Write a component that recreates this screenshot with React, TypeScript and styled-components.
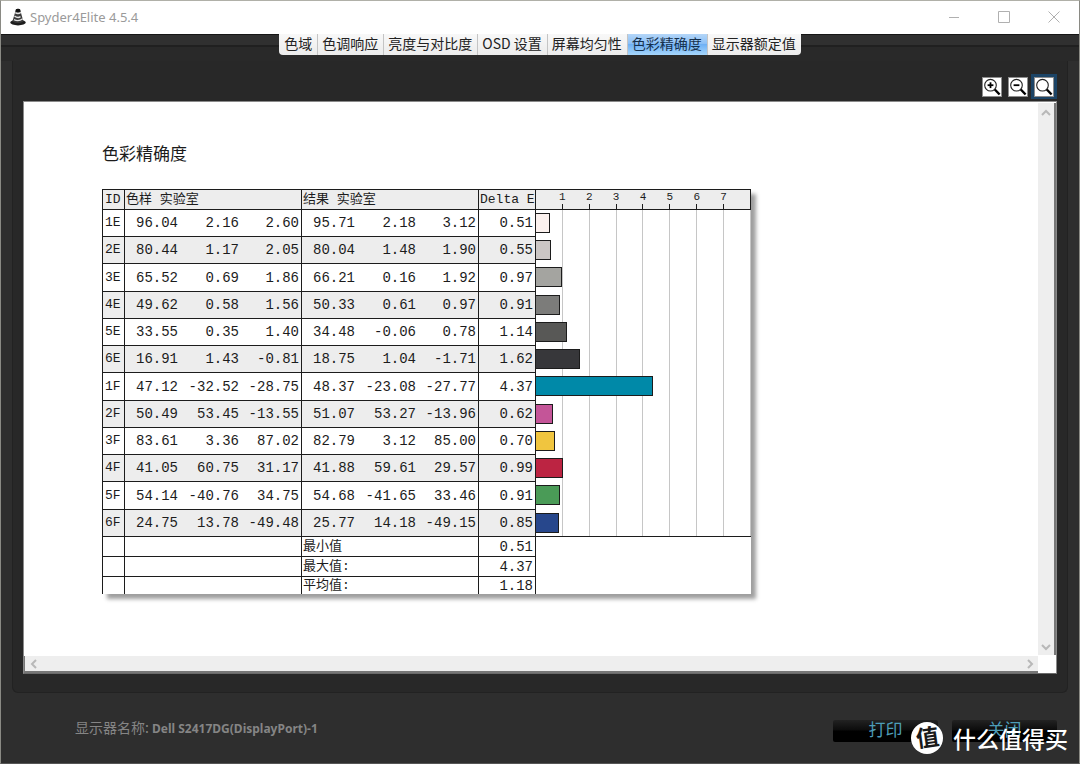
import React from 'react';
import styled, { createGlobalStyle } from 'styled-components';

const sans = `'Noto Sans', 'Noto Sans CJK SC', sans-serif`;
const mono = `'Liberation Mono', 'Noto Sans CJK SC', monospace`;
const ink = '#1c1c1c';

const GlobalStyle = createGlobalStyle`
  *, *::before, *::after { box-sizing: border-box; }
  body { margin: 0; background: #2e2e2e; font-family: ${sans}; }
  button { font: inherit; padding: 0; border: 0; background: none; cursor: pointer; }
`;

const Window = styled.div`
  position: relative;
  display: flex;
  flex-direction: column;
  min-height: 100vh;
  background: #2e2e2e;
  border: 1px solid #8a8a84;
  border-top-color: #b0b0a8;
  border-bottom-color: #555;
`;

const TitleBar = styled.header`
  display: flex;
  align-items: center;
  height: 33px;
  padding: 0 13px 2px 8px;
  background: #fff;
  color: #9a9a9a;
`;

const Title = styled.h1`
  flex: 1;
  margin: 0 0 0 3px;
  font-size: 13px;
  line-height: 20px;
  font-weight: 400;
`;

const WindowControls = styled.div`
  display: flex;
  gap: 26px;
`;

const WindowButton = styled.button`
  display: grid;
  place-items: center;
  width: 24px;
  height: 24px;
  color: #b0b0b0;
`;

const TabStrip = styled.nav`
  display: flex;
  justify-content: center;
  align-items: flex-start;
  height: 27px;
  border-top: 1px solid #161616;
  background: linear-gradient(#303030 0 10px, #202020 10px 12px, #292929 12px);
`;

const Tabs = styled.div`
  display: flex;
  height: 21px;
  margin-top: -1px;
`;

const Tab = styled.button<{ $active?: boolean }>`
  padding: 0 5px 3px 4px;
  font-family: 'Noto Sans CJK SC', sans-serif;
  font-size: 14px;
  line-height: 18px;
  color: ${(p) => (p.$active ? '#16304c' : '#222')};
  background: ${(p) =>
    p.$active
      ? 'linear-gradient(#b4d6f8, #8cc0f6 45%, #6fb1f5 50%, #a6d6fc)'
      : 'linear-gradient(#f8f8f8, #ececec)'};

  & + & { border-left: 1px solid #c4c4c4; }
  &:first-child { padding-left: 5px; border-bottom-left-radius: 4px; }
  &:last-child { border-bottom-right-radius: 4px; }
`;

const Panel = styled.main`
  flex: 1;
  display: flex;
  flex-direction: column;
  gap: 2px;
  margin: 0 11px;
  padding: 13px 10px 18px;
  background: #282828;
  border: 1px solid #222;
  border-top: 0;
  border-radius: 0 0 6px 6px;
`;

const Toolbar = styled.div`
  display: flex;
  justify-content: flex-end;
`;

const ToolButton = styled.button<{ $active?: boolean }>`
  display: grid;
  place-items: center;
  width: 26px;
  height: 25px;
  background: ${(p) => (p.$active ? '#1c4466' : 'transparent')};

  svg { background: #fff; border: 1px solid #8d8d8d; }
`;

const Viewer = styled.section`
  flex: 1;
  display: grid;
  grid-template-columns: 1fr 18px;
  grid-template-rows: 1fr 18px;
  background: #fff;
  border: 1px solid #8a8a8a;
  border-bottom-color: #6a6a6a;
`;

const Sheet = styled.article`
  padding: 39px 20px 40px 78px;
  color: ${ink};
`;

const ScrollTrack = styled.div<{ $vertical?: boolean }>`
  display: flex;
  flex-direction: ${(p) => (p.$vertical ? 'column' : 'row')};
  justify-content: space-between;
  align-items: center;
  margin-top: 1px;
  padding: ${(p) => (p.$vertical ? '2px 0 0' : '0')};
  background: #eee;
  border-right: ${(p) => (p.$vertical ? '2px solid #777' : '0')};
  border-bottom: ${(p) => (p.$vertical ? '0' : '2px solid #777')};
  border-left: ${(p) => (p.$vertical ? '0' : '1px solid #777')};
`;

const ScrollButton = styled.button`
  display: grid;
  place-items: center;
  width: 17px;
  height: 16px;
  color: #b8b8b8;
`;

const SheetTitle = styled.h2`
  margin: 0 0 24px;
  font-family: 'Noto Sans CJK SC', sans-serif;
  font-size: 17px;
  line-height: 24px;
  font-weight: 400;
`;

const Report = styled.table`
  table-layout: fixed;
  width: 649px;
  border-collapse: separate;
  border-spacing: 0;
  background: #fff;
  font-family: ${mono};
  font-size: 14px;
  box-shadow: 5px 5px 4px rgba(0, 0, 0, 0.38);

  th, td {
    padding: 0 2px 0 1px;
    border-top: 1px solid ${ink};
    border-left: 1px solid ${ink};
    font-weight: 400;
    text-align: left;
    line-height: 16px;
    white-space: nowrap;
  }
`;

const HeadRow = styled.tr`
  height: 20px;
  background: #ededed;
  font-size: 13px;

  && th:first-child { padding-left: 2px; }
  && th:last-child { padding: 0; border-right: 1px solid ${ink}; }
`;

const PatchRow = styled.tr`
  height: 27px;

  &:nth-child(4n + 3) { height: 28px; }
  &:nth-child(even) > :not(:last-child) { background: #ededed; }
  && > th { font-size: 13px; padding-left: 2px; }
`;

const SummaryRow = styled.tr`
  height: 20px;
  font-size: 13px;

  &:last-child { height: 18px; }
`;

const NumberCell = styled.td`
  && { text-align: right; font-size: 14px; }
`;

const LabValues = styled.div`
  display: grid;
  grid-template-columns: 1fr 61px 60px;
  text-align: right;
`;

const Axis = styled.div`
  display: grid;
  grid-template-columns: repeat(7, 1fr);
  padding: 0 13px;
`;

const AxisMark = styled.span`
  display: flex;
  flex-direction: column;
  align-items: center;
  font-size: 11px;
  line-height: 14px;

  &::after {
    content: '';
    width: 1px;
    height: 5px;
    background: ${ink};
  }
`;

const ChartCell = styled.td`
  && {
    padding: 0;
    border-top: 0;
    background: repeating-linear-gradient(
      to right,
      transparent 0 calc(12.5% - 1px),
      #c6c6c6 calc(12.5% - 1px) 12.5%
    );
  }
  ${PatchRow}:first-child > && { border-top: 1px solid ${ink}; }
`;

const Bar = styled.div`
  height: 20px;
  border: 1px solid ${ink};
  border-left: 0;
`;

const Footer = styled.footer`
  display: flex;
  justify-content: space-between;
  height: 70px;
  padding: 26px 22px 0 74px;
`;

const DisplayName = styled.p`
  margin: 0;
  font-size: 12px;
  line-height: 16px;
  color: #858585;
  span { font-family: 'Noto Sans CJK SC', sans-serif; font-size: 14px; }
`;

const Actions = styled.div`
  display: flex;
  gap: 14px;
`;

const ActionButton = styled.button`
  width: 105px;
  height: 22px;
  margin-top: 1px;
  padding-bottom: 4px;
  border-radius: 2px;
  background: linear-gradient(#222, #0c0c0c 45%, #000 50%);
  color: #4d9db8;
  font-family: 'Noto Sans CJK SC', sans-serif;
  font-size: 17px;
  line-height: 18px;
`;

const Watermark = styled.div`
  position: absolute;
  right: 11px;
  bottom: 9px;
  display: flex;
  align-items: center;
  gap: 10px;
  color: #fff;
  font-family: 'Noto Sans CJK SC', sans-serif;
  font-size: 23px;
  line-height: 32px;
  font-weight: 500;
  pointer-events: none;
`;

const Seal = styled.span`
  display: grid;
  place-items: center;
  width: 32px;
  height: 32px;
  border-radius: 50%;
  background: #fff;
  color: #1a1a1a;
  line-height: 28px;

  b { transform: rotate(-8deg); padding-bottom: 4px; }
`;

const tabs = ['色域', '色调响应', '亮度与对比度', 'OSD 设置', '屏幕均匀性', '色彩精确度', '显示器额定值'];

type Patch = { id: string; sample: string[]; result: string[]; delta: string; color: string };

const patches: Patch[] = [
  { id: '1E', sample: ['96.04', '2.16', '2.60'], result: ['95.71', '2.18', '3.12'], delta: '0.51', color: '#fbf1ee' },
  { id: '2E', sample: ['80.44', '1.17', '2.05'], result: ['80.04', '1.48', '1.90'], delta: '0.55', color: '#cbc6c4' },
  { id: '3E', sample: ['65.52', '0.69', '1.86'], result: ['66.21', '0.16', '1.92'], delta: '0.97', color: '#a4a4a0' },
  { id: '4E', sample: ['49.62', '0.58', '1.56'], result: ['50.33', '0.61', '0.97'], delta: '0.91', color: '#7c7c7a' },
  { id: '5E', sample: ['33.55', '0.35', '1.40'], result: ['34.48', '-0.06', '0.78'], delta: '1.14', color: '#585856' },
  { id: '6E', sample: ['16.91', '1.43', '-0.81'], result: ['18.75', '1.04', '-1.71'], delta: '1.62', color: '#37373a' },
  { id: '1F', sample: ['47.12', '-32.52', '-28.75'], result: ['48.37', '-23.08', '-27.77'], delta: '4.37', color: '#0089a8' },
  { id: '2F', sample: ['50.49', '53.45', '-13.55'], result: ['51.07', '53.27', '-13.96'], delta: '0.62', color: '#c45598' },
  { id: '3F', sample: ['83.61', '3.36', '87.02'], result: ['82.79', '3.12', '85.00'], delta: '0.70', color: '#f0c53f' },
  { id: '4F', sample: ['41.05', '60.75', '31.17'], result: ['41.88', '59.61', '29.57'], delta: '0.99', color: '#bc2442' },
  { id: '5F', sample: ['54.14', '-40.76', '34.75'], result: ['54.68', '-41.65', '33.46'], delta: '0.91', color: '#4a9b57' },
  { id: '6F', sample: ['24.75', '13.78', '-49.48'], result: ['25.77', '14.18', '-49.15'], delta: '0.85', color: '#27478c' },
];

const summary = [
  { label: '最小值', value: '0.51' },
  { label: '最大值:', value: '4.37' },
  { label: '平均值:', value: '1.18' },
];

const AXIS_MAX = 8;

function AppIcon() {
  return (
    <svg width="18" height="18" viewBox="0 0 18 18" aria-hidden="true">
      <ellipse cx="9" cy="14.6" rx="7.8" ry="2.8" fill="#1e1e1e" />
      <path d="M7 1.2Q9 .2 11 1.2L14.4 13.4Q9 16.4 3.4 13.4Z" fill="#3a3a3a" />
      <path d="M6.3 4.6Q9 6.4 11.9 4.4M5.5 8.2Q9 10.6 11.5 8.6M5 11.6Q9.4 14 13.8 10.8" fill="none" stroke="#e4e4e4" strokeWidth="1.4" />
      <path d="M7 1.2Q9 .2 11 1.2L11.5 3.4Q9 4.6 6.5 3.4Z" fill="#111" />
    </svg>
  );
}

function Magnifier({ sign }: { sign?: '+' | '-' }) {
  return (
    <svg width="20" height="20" viewBox="0 0 18 18" aria-hidden="true">
      <circle cx="7.5" cy="7.2" r="5.8" fill="#fff" stroke="#222" strokeWidth="1.1" />
      <path d="M11.8 11.5L16.6 16.5" stroke="#000" strokeWidth="2.4" />
      {sign && <path d="M4.6 7.2H10.4" stroke="#000" strokeWidth="1.8" />}
      {sign === '+' && <path d="M7.5 4.3V10.1" stroke="#000" strokeWidth="1.8" />}
    </svg>
  );
}

function Chevron({ d }: { d: string }) {
  return (
    <svg width="10" height="10" viewBox="0 0 10 10" aria-hidden="true">
      <path d={d} fill="none" stroke="currentColor" strokeWidth="2" />
    </svg>
  );
}

function Lab({ values }: { values: string[] }) {
  return (
    <LabValues>
      {values.map((v, i) => (
        <span key={i}>{v}</span>
      ))}
    </LabValues>
  );
}

const IdCol = styled.col`width: 22px;`;
const LabCol = styled.col`width: 177px;`;
const DeltaCol = styled.col`width: 57px;`;

export default function App() {
  return (
    <>
      <GlobalStyle />
      <Window>
        <TitleBar>
          <AppIcon />
          <Title>Spyder4Elite 4.5.4</Title>
          <WindowControls>
            <WindowButton aria-label="最小化">
              <svg width="12" height="12"><path d="M1 6.5H11" stroke="currentColor" /></svg>
            </WindowButton>
            <WindowButton aria-label="最大化">
              <svg width="12" height="12"><path d="M.5 .5H11.5V11.5H.5Z" fill="none" stroke="currentColor" /></svg>
            </WindowButton>
            <WindowButton aria-label="关闭窗口">
              <svg width="12" height="12"><path d="M.5 .5L11.5 11.5M11.5 .5L.5 11.5" stroke="currentColor" /></svg>
            </WindowButton>
          </WindowControls>
        </TitleBar>

        <TabStrip>
          <Tabs>
            {tabs.map((t) => (
              <Tab key={t} $active={t === '色彩精确度'}>{t}</Tab>
            ))}
          </Tabs>
        </TabStrip>

        <Panel>
          <Toolbar>
            <ToolButton aria-label="放大"><Magnifier sign="+" /></ToolButton>
            <ToolButton aria-label="缩小"><Magnifier sign="-" /></ToolButton>
            <ToolButton aria-label="适合窗口" $active><Magnifier /></ToolButton>
          </Toolbar>

          <Viewer>
            <Sheet>
              <SheetTitle>色彩精确度</SheetTitle>
              <Report>
                <colgroup>
                  <IdCol />
                  <LabCol />
                  <LabCol />
                  <DeltaCol />
                  <col />
                </colgroup>
                <thead>
                  <HeadRow>
                    <th scope="col">ID</th>
                    <th scope="col">色样 实验室</th>
                    <th scope="col">结果 实验室</th>
                    <th scope="col">Delta E</th>
                    <th scope="col">
                      <Axis>
                        {[1, 2, 3, 4, 5, 6, 7].map((n) => (
                          <AxisMark key={n}>{n}</AxisMark>
                        ))}
                      </Axis>
                    </th>
                  </HeadRow>
                </thead>
                <tbody>
                  {patches.map((p) => (
                    <PatchRow key={p.id}>
                      <th scope="row">{p.id}</th>
                      <td><Lab values={p.sample} /></td>
                      <td><Lab values={p.result} /></td>
                      <NumberCell>{p.delta}</NumberCell>
                      <ChartCell>
                        <Bar style={{ width: `${(Number(p.delta) / AXIS_MAX) * 100}%`, background: p.color }} />
                      </ChartCell>
                    </PatchRow>
                  ))}
                </tbody>
                <tfoot>
                  {summary.map((s, i) => (
                    <SummaryRow key={s.label}>
                      <td />
                      <td />
                      <th scope="row">{s.label}</th>
                      <NumberCell>{s.value}</NumberCell>
                      {i === 0 && <td rowSpan={3} />}
                    </SummaryRow>
                  ))}
                </tfoot>
              </Report>
            </Sheet>
            <ScrollTrack $vertical>
              <ScrollButton aria-label="向上滚动"><Chevron d="M1 7L5 3L9 7" /></ScrollButton>
              <ScrollButton aria-label="向下滚动"><Chevron d="M1 3L5 7L9 3" /></ScrollButton>
            </ScrollTrack>
            <ScrollTrack>
              <ScrollButton aria-label="向左滚动"><Chevron d="M7 1L3 5L7 9" /></ScrollButton>
              <ScrollButton aria-label="向右滚动"><Chevron d="M3 1L7 5L3 9" /></ScrollButton>
            </ScrollTrack>
          </Viewer>
        </Panel>

        <Footer>
          <DisplayName>
            <span>显示器名称: </span>
            <b>Dell S2417DG(DisplayPort)-1</b>
          </DisplayName>
          <Actions>
            <ActionButton>打印</ActionButton>
            <ActionButton>关闭</ActionButton>
          </Actions>
        </Footer>

        <Watermark>
          <Seal><b>值</b></Seal>
          <span>什么值得买</span>
        </Watermark>
      </Window>
    </>
  );
}
